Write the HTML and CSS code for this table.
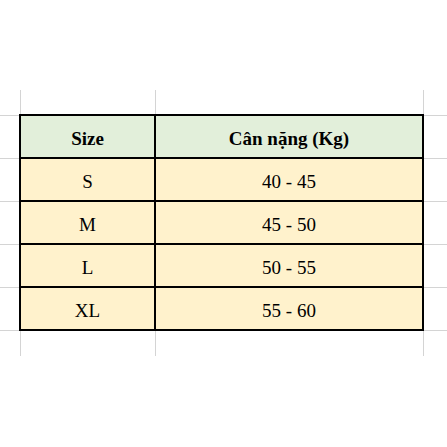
FILE: index.html
```html
<!DOCTYPE html>
<html lang="vi">
<head>
<meta charset="utf-8">
<title>Bảng size</title>
<link rel="stylesheet" href="styles.css">
</head>
<body>
<div class="page">
<table class="sheet">
  <colgroup>
    <col class="c-edge-l">
    <col class="c-size">
    <col class="c-weight">
    <col class="c-edge-r">
  </colgroup>
  <tr class="spacer top">
    <td class="edge"></td><td></td><td></td><td class="edge"></td>
  </tr>
  <tr class="head">
    <td class="edge"></td>
    <th>Size</th>
    <th>Cân nặng (Kg)</th>
    <td class="edge"></td>
  </tr>
  <tr class="row">
    <td class="edge"></td><td>S</td><td>40 - 45</td><td class="edge"></td>
  </tr>
  <tr class="row">
    <td class="edge"></td><td>M</td><td>45 - 50</td><td class="edge"></td>
  </tr>
  <tr class="row">
    <td class="edge"></td><td>L</td><td>50 - 55</td><td class="edge"></td>
  </tr>
  <tr class="row">
    <td class="edge"></td><td>XL</td><td>55 - 60</td><td class="edge"></td>
  </tr>
  <tr class="spacer bottom">
    <td class="edge"></td><td></td><td></td><td class="edge"></td>
  </tr>
</table>
</div>
</body>
</html>
```
FILE: styles.css
```css
html, body {
  margin: 0;
  padding: 0;
  background: #ffffff;
}
.page {
  width: 447px;
  height: 447px;
  padding-top: 90px;
  box-sizing: border-box;
  overflow: hidden;
}
.sheet {
  width: 447px;
  border-collapse: collapse;
  table-layout: fixed;
  font-family: "Liberation Serif", "Times New Roman", serif;
  font-size: 19px;
  color: #000;
}
.c-edge-l { width: 20px; }
.c-size { width: 135px; }
.c-weight { width: 268px; }
.c-edge-r { width: 24px; }

.sheet td, .sheet th {
  padding: 4px 0 0 0;
  text-align: center;
  vertical-align: middle;
  height: 43px;
  box-sizing: border-box;
  line-height: 22px;
}
.sheet th {
  font-weight: bold;
}
.head th, .row td {
  border: 2px solid #000;
}
.head th { background: #e2efda; }
.row td { background: #fff2cc; }

.sheet .edge {
  background: #fff;
  border: none;
  border-top: 1px solid #d4d4d4;
  border-bottom: 1px solid #d4d4d4;
}
.spacer td {
  height: 25px;
  border-left: 1px solid #d4d4d4;
  border-right: 1px solid #d4d4d4;
  background: #fff;
}
.spacer .edge {
  border-left: none;
  border-right: none;
}
.spacer.top td { border-top: none; }
.spacer.bottom td { border-bottom: none; height: 26px; }
.spacer td.edge:first-child { border-right: 1px solid #d4d4d4; }
.spacer td.edge:last-child { border-left: 1px solid #d4d4d4; }
.spacer.top .edge { border-top: none; }
.spacer.bottom .edge { border-bottom: none; }
```
